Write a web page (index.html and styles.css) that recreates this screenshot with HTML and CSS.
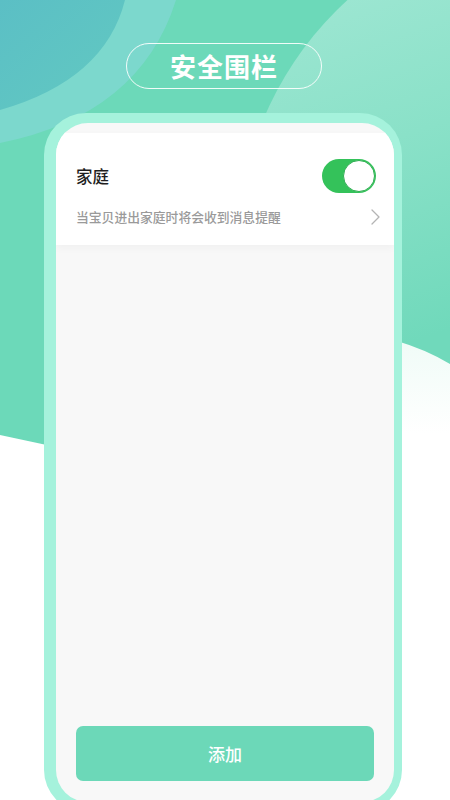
FILE: index.html
```html
<!DOCTYPE html>
<html lang="zh-CN">
<head>
<meta charset="utf-8">
<title>安全围栏</title>
<link rel="stylesheet" href="styles.css">
</head>
<body>
<div class="page">
  <svg class="bg" width="450" height="800" viewBox="0 0 450 800" aria-hidden="true">
    <defs>
      <linearGradient id="blob" gradientUnits="userSpaceOnUse" x1="300" y1="0" x2="420" y2="340">
        <stop offset="0" stop-color="#9de6d2"/>
        <stop offset="0.45" stop-color="#8ae1c8"/>
        <stop offset="1" stop-color="#70d9bb"/>
      </linearGradient>
      <linearGradient id="dark" x1="0" y1="0" x2="1" y2="1">
        <stop offset="0" stop-color="#5bbfc5"/>
        <stop offset="1" stop-color="#62c9c1"/>
      </linearGradient>
      <linearGradient id="white" x1="0" y1="0" x2="0" y2="1">
        <stop offset="0" stop-color="#eefbf6"/>
        <stop offset="0.22" stop-color="#ffffff"/>
      </linearGradient>
    </defs>
    <rect width="450" height="800" fill="#6cd9b9"/>
    <circle cx="575" cy="250" r="338" fill="url(#blob)"/>
    <path d="M0,0 L176,0 Q140,115 0,143 Z" fill="#7cd8cd"/>
    <path d="M0,0 L125,0 Q105,80 0,110 Z" fill="url(#dark)"/>
    <path d="M0,435 L70,450 L330,330 Q400,334 450,364 L450,800 L0,800 Z" fill="url(#white)"/>
  </svg>

  <div class="content">
    <h1 class="title-pill">安全围栏</h1>

    <div class="phone">
      <div class="screen">
        <div class="fence-card">
          <div class="fence-head">
            <span class="fence-name">家庭</span>
            <span class="toggle"><span class="knob"></span></span>
          </div>
          <div class="fence-sub">
            <span class="fence-desc">当宝贝进出家庭时将会收到消息提醒</span>
            <svg class="chevron" width="9" height="16" viewBox="0 0 9 16" aria-hidden="true">
              <path d="M1 1 L8 8 L1 15" fill="none" stroke="#b4b4b4" stroke-width="1.3" stroke-linecap="round" stroke-linejoin="round"/>
            </svg>
          </div>
        </div>
        <div class="spacer"></div>
        <button class="add-btn" type="button">添加</button>
      </div>
    </div>
  </div>
</div>
</body>
</html>
```

FILE: styles.css
```css
* {
  box-sizing: border-box;
}

html,
body {
  margin: 0;
  padding: 0;
}

body {
  width: 450px;
  height: 800px;
  overflow: hidden;
  font-family: "Noto Sans CJK SC", "Noto Sans", sans-serif;
  background: #ffffff;
}

.page {
  position: relative;
  width: 450px;
  height: 800px;
  overflow: hidden;
}

.bg {
  position: absolute;
  left: 0;
  top: 0;
  display: block;
}

.content {
  position: relative;
  display: flex;
  flex-direction: column;
  align-items: center;
}

.title-pill {
  margin: 43px 0 0 -2px;
  width: 196px;
  height: 46px;
  border: 1.3px solid rgba(255, 255, 255, 0.9);
  border-radius: 23px;
  display: flex;
  align-items: center;
  justify-content: center;
  color: #ffffff;
  font-size: 26px;
  font-weight: 700;
  letter-spacing: 1px;
  line-height: 1;
}

.phone {
  margin-top: 24px;
  align-self: flex-start;
  margin-left: 44px;
  width: 358px;
  height: 699px;
  background: #a5f2dc;
  border-radius: 42px;
  padding: 10px 8px 10px 12px;
}

.screen {
  height: 100%;
  background: #f8f8f8;
  border-radius: 32px;
  overflow: hidden;
  display: flex;
  flex-direction: column;
  padding-top: 10px;
  padding-bottom: 21px;
}

.fence-card {
  background: #ffffff;
  padding: 26px 14px 18px 20px;
  box-shadow: 0 3px 8px rgba(0, 0, 0, 0.035);
}

.fence-head {
  display: flex;
  align-items: center;
  justify-content: space-between;
  padding-right: 4px;
}

.fence-name {
  font-size: 16.5px;
  font-weight: 500;
  color: #1e1e1e;
  line-height: 34px;
}

.toggle {
  width: 54px;
  height: 34px;
  border-radius: 17px;
  background: #34c25a;
  display: flex;
  align-items: center;
  justify-content: flex-end;
  padding: 1px;
}

.knob {
  width: 32px;
  height: 32px;
  border-radius: 50%;
  background: #ffffff;
  border: 1.2px solid #2fae52;
}

.fence-sub {
  margin-top: 14px;
  display: flex;
  align-items: center;
  justify-content: space-between;
  height: 20px;
}

.fence-desc {
  font-size: 12.8px;
  font-weight: 500;
  color: #9a9a9a;
  line-height: 20px;
}

.chevron {
  display: block;
}

.spacer {
  flex: 1;
}

.add-btn {
  margin: 0 20px;
  height: 55px;
  border: none;
  border-radius: 7px;
  background: #6cd8b8;
  color: #ffffff;
  font-family: "Noto Sans CJK SC", "Noto Sans", sans-serif;
  font-size: 17px;
  font-weight: 500;
  padding: 0;
}
```
